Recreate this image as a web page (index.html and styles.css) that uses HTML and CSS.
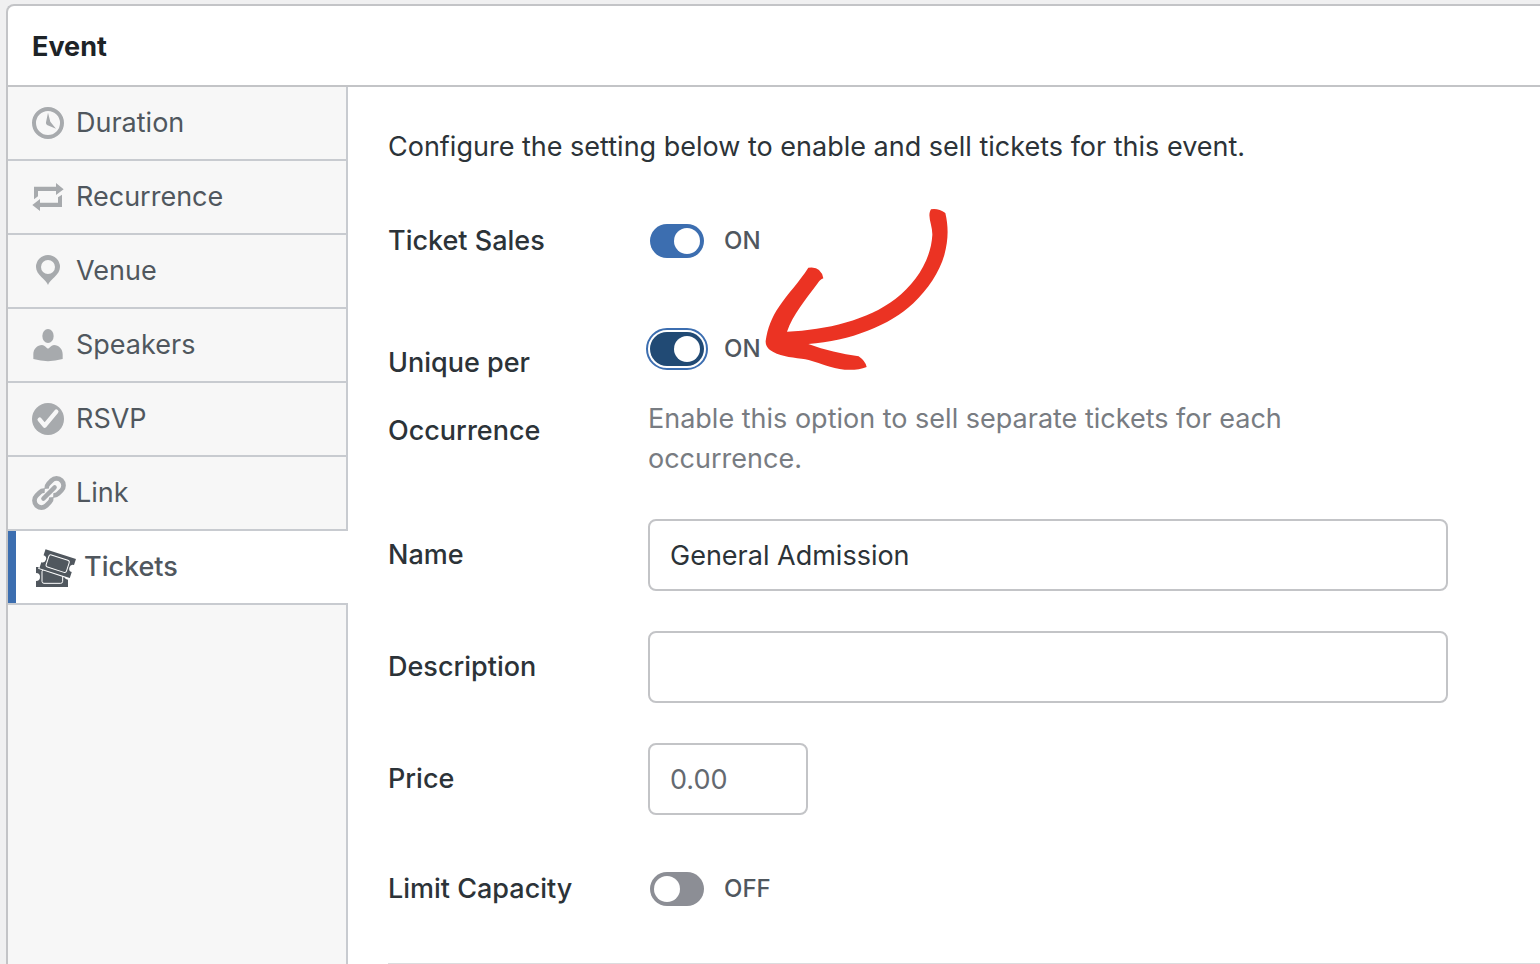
FILE: index.html
```html
<!DOCTYPE html>
<html lang="en">
<head>
    <meta charset="UTF-8">
    <meta name="viewport" content="width=device-width, initial-scale=1.0">
    <title>Event</title>
    <link rel="stylesheet" href="styles.css">
</head>
<body>
    <div class="panel">
        <header class="panel-header">
            <h2>Event</h2>
        </header>

        <div class="panel-body">
            <nav class="tabs">
                <a href="#duration" class="tab">
                    <svg class="icon" viewBox="0 0 120 120" aria-hidden="true">
                        <circle cx="60" cy="60" r="42" fill="none" stroke="currentColor" stroke-width="12"/>
                        <path d="M60 29L67 56L84 77L57 66Q53 63 54 58Z"/>
                    </svg>
                    Duration
                </a>
                <a href="#recurrence" class="tab">
                    <svg class="icon" viewBox="0 0 120 120" aria-hidden="true">
                        <path d="M18 29H84V18L107 37L84 54V42H30V58L18 67Z"/>
                        <path d="M102 53V90H36V102L13 84L36 66V77H90V61Z"/>
                    </svg>
                    Recurrence
                </a>
                <a href="#venue" class="tab">
                    <svg class="icon" viewBox="0 0 120 120" aria-hidden="true">
                        <path fill-rule="evenodd" d="M60 102C55 86 24 72 24 48A36 36 0 1 1 96 48C96 72 65 86 60 102ZM60 27A21 21 0 1 0 60 69A21 21 0 1 0 60 27Z"/>
                    </svg>
                    Venue
                </a>
                <a href="#speakers" class="tab">
                    <svg class="icon" viewBox="0 0 120 120" aria-hidden="true">
                        <ellipse cx="60" cy="33" rx="17" ry="21"/>
                        <path d="M16 102V88C16 72 28 60 42 60C50 61 54 68 60 71C66 68 70 61 78 60C92 60 104 72 104 88V102Q60 115 16 102Z"/>
                    </svg>
                    Speakers
                </a>
                <a href="#rsvp" class="tab">
                    <svg class="icon" viewBox="0 0 120 120" aria-hidden="true">
                        <circle cx="60" cy="60" r="48"/>
                        <path d="M35 62L50 80L85 38" fill="none" stroke="#f7f7f7" stroke-width="13" stroke-linecap="round" stroke-linejoin="round"/>
                    </svg>
                    RSVP
                </a>
                <a href="#link" class="tab">
                    <svg class="icon" viewBox="0 0 120 120" aria-hidden="true">
                        <g transform="translate(63 60) rotate(-45)" fill="none" stroke="currentColor" stroke-width="14">
                            <path d="M4 -14Q10 -21 18 -21H32A21 21 0 0 1 32 21H18Q10 21 4 14"/>
                            <path d="M-4 14Q-10 21 -18 21H-32A21 21 0 0 1 -32 -21H-18Q-10 -21 -4 -14"/>
                            <path d="M-24 0H24" stroke-width="13" stroke-linecap="round"/>
                        </g>
                    </svg>
                    Link
                </a>
                <a href="#tickets" class="tab active">
                    <svg class="icon" viewBox="0 0 120 120" aria-hidden="true">
                        <path d="M0 60H96V78A9 9 0 0 0 96 98V120H0V102A10 10 0 0 0 0 78Z"/>
                        <rect x="18" y="68" width="62" height="41" rx="6" fill="none" stroke="#fff" stroke-width="3"/>
                        <g transform="translate(65 50) rotate(18)">
                            <path d="M-48 -30H48V-11A11 11 0 0 0 48 11V30H-48V11A11 11 0 0 0 -48 -11Z" stroke="#fff" stroke-width="6" paint-order="stroke"/>
                            <rect x="-32" y="-19" width="64" height="38" rx="6" fill="none" stroke="#fff" stroke-width="3"/>
                        </g>
                    </svg>
                    Tickets
                </a>
            </nav>

            <form class="settings" id="tickets">
                <p>Configure the setting below to enable and sell tickets for this event.</p>

                <div class="field">
                    <label for="ticket-sales">Ticket Sales</label>
                    <div class="control">
                        <div class="switch">
                            <input type="checkbox" id="ticket-sales" class="toggle" checked>
                            <span>ON</span>
                        </div>
                    </div>
                </div>

                <div class="field">
                    <label for="unique">Unique per Occurrence</label>
                    <div class="control">
                        <div class="switch">
                            <input type="checkbox" id="unique" class="toggle focused" checked>
                            <span>ON</span>
                        </div>
                        <div class="help">Enable this option to sell separate tickets for each occurrence.</div>
                        <svg class="arrow" viewBox="420 30 600 540" aria-hidden="true">
                            <path d="M933 58Q955 54 976 69C986 112 985 150 973 195C958 247 925 296 880 340C810 406 690 454 565 462C615 480 665 492 716 499Q737 514 740 531C710 543 665 542 630 530C595 520 575 510 545 506C510 502 475 498 450 480Q436 469 437 453C442 415 456 380 477 350C505 309 538 275 565 233Q603 227 610 265C601 268 597 274 592 281C558 327 518 374 501 425C620 420 744 390 826 327C887 280 933 210 937 135C938 105 920 80 933 58Z"/>
                        </svg>
                    </div>
                </div>

                <div class="field">
                    <label for="name">Name</label>
                    <div class="control">
                        <input type="text" id="name" class="text" value="General Admission">
                    </div>
                </div>

                <div class="field">
                    <label for="description">Description</label>
                    <div class="control">
                        <input type="text" id="description" class="text">
                    </div>
                </div>

                <div class="field">
                    <label for="price">Price</label>
                    <div class="control">
                        <input type="text" id="price" class="text small" placeholder="0.00">
                    </div>
                </div>

                <div class="field">
                    <label for="limit">Limit Capacity</label>
                    <div class="control">
                        <div class="switch">
                            <input type="checkbox" id="limit" class="toggle">
                            <span>OFF</span>
                        </div>
                    </div>
                </div>

                <hr>
            </form>
        </div>
    </div>
</body>
</html>
```

FILE: styles.css
```css
* {
    margin: 0;
    padding: 0;
    box-sizing: border-box;
}

body {
    background: #f0f0f1;
    color: #2c3338;
    font-family: Inter, "Liberation Sans", sans-serif;
    font-size: 27px;
    line-height: 40px;
    padding: 4px 0 0 6px;
}

.panel {
    background: #fff;
    border: 2px solid #c3c4c7;
    border-right: none;
    border-bottom: none;
    border-radius: 8px 0 0 0;
    overflow: hidden;
}

.panel-header {
    padding: 21px 24px 18px;
    border-bottom: 2px solid #c3c4c7;
}

.panel-header h2 {
    color: #1d2327;
    font-size: 27px;
    font-weight: 700;
}

.panel-body {
    display: flex;
}

/* Tabs */
.tabs {
    flex: 0 0 340px;
    background: #f7f7f7;
    border-right: 2px solid #c8cbd0;
}

.tab {
    display: flex;
    align-items: center;
    gap: 8px;
    height: 74px;
    padding-left: 20px;
    border-bottom: 2px solid #c8cbd0;
    color: #50575e;
    text-decoration: none;
}

.tab .icon {
    width: 40px;
    height: 40px;
    color: #a7aaad;
    fill: currentColor;
}

.tab.active {
    margin-right: -2px;
    background: #fff;
    box-shadow: inset 8px 0 0 #3c6eb0;
    padding-left: 28px;
    font-weight: 500;
}

.tab.active .icon {
    color: #50575e;
}

/* Settings */
.settings {
    flex: 1;
    display: flex;
    flex-direction: column;
    gap: 40px;
    padding: 40px 0 0 40px;
}

.field {
    display: flex;
    align-items: center;
}

.field label {
    flex: 0 0 260px;
    padding-right: 40px;
    font-weight: 500;
    line-height: 68px;
}

.control {
    position: relative;
    flex: 1;
    max-width: 800px;
}

.switch {
    display: flex;
    align-items: center;
    gap: 20px;
    height: 68px;
    padding-left: 2px;
    color: #50575e;
    font-size: 24px;
    font-weight: 500;
}

.toggle {
    appearance: none;
    width: 54px;
    height: 34px;
    padding: 4px;
    border-radius: 17px;
    background: #8c8e95;
    cursor: pointer;
}

.toggle::before {
    content: "";
    display: block;
    width: 26px;
    height: 26px;
    border-radius: 50%;
    background: #fff;
}

.toggle:checked {
    background: #3c6eb0;
}

.toggle:checked::before {
    margin-left: auto;
}

.toggle:focus,
.toggle.focused {
    background: #214a74;
    outline: 2px solid #3c6eb0;
    outline-offset: 2px;
}

.help {
    max-width: 700px;
    margin-top: 16px;
    color: #787c82;
}

.text {
    display: block;
    width: 100%;
    height: 72px;
    padding: 0 20px;
    border: 2px solid #c3c4c7;
    border-radius: 8px;
    background: #fff;
    color: #2c3338;
    font: inherit;
}

.text.small {
    width: 160px;
}

.text::placeholder {
    color: #646970;
}

.arrow {
    position: absolute;
    top: -115px;
    left: 112px;
    width: 200px;
    height: 180px;
    fill: #eb3323;
    pointer-events: none;
}

hr {
    border: none;
    border-top: 1px solid #dcdcde;
}
```
